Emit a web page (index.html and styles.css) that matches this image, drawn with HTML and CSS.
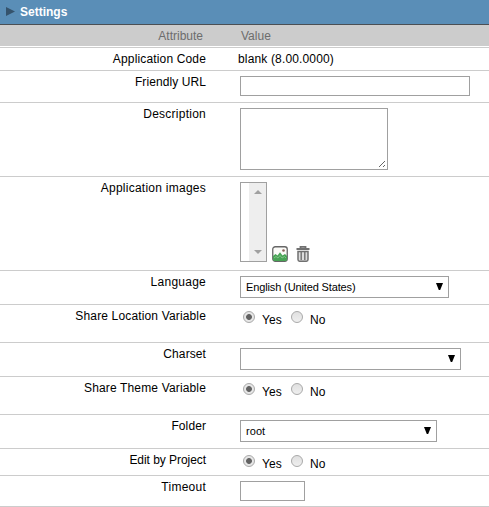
FILE: index.html
```
<!DOCTYPE html>
<html lang="en">
<head>
<meta charset="utf-8">
<title>Settings</title>
<link rel="stylesheet" href="styles.css">
</head>
<body>
<header class="title">
  <svg class="marker" width="9" height="9" viewBox="0 0 9 9"><path d="M0 0L9 4.5L0 9Z"/></svg>
  <span>Settings</span>
</header>
<div class="columns"><div class="label">Attribute</div><div>Value</div></div>
<main>
  <div class="row code"><div class="label">Application Code</div><div class="value plain">blank (8.00.0000)</div></div>
  <div class="row url"><div class="label">Friendly URL</div><div class="value"><div class="field wide"></div></div></div>
  <div class="row description"><div class="label">Description</div><div class="value"><div class="area">
    <svg width="9" height="9" viewBox="0 0 9 9" shape-rendering="crispEdges"><path d="M1 7L7 1M5 7L7 5"/></svg>
  </div></div></div>
  <div class="row images"><div class="label">Application images</div><div class="value">
    <div class="list"><div class="track">
      <svg width="8" height="4" viewBox="0 0 8 4"><path d="M0 4L4 0L8 4Z"/></svg>
      <svg width="8" height="4" viewBox="0 0 8 4"><path d="M0 0L4 4L8 0Z"/></svg>
    </div></div>
    <svg class="picture" width="16" height="16" viewBox="0 0 16 16">
      <rect x=".75" y=".75" width="14.5" height="14.5" rx="2.5" fill="#fbfbf8" stroke="#666" stroke-width="1.3"/>
      <path d="M1 10L3.5 8L5.5 9.5L8 6.2L10.5 9.5L13 8L15 10V13.5Q15 15 13.5 15H2.5Q1 15 1 13.5Z" fill="#48a355"/>
      <path d="M2 12L4 10.5L6 12L8 9.5L10 12L12.5 10.5L14 12" fill="none" stroke="#8dca92" stroke-width=".8"/>
      <circle cx="11.5" cy="4.5" r="1.3" fill="#8b6259"/>
    </svg>
    <svg class="trash" width="14" height="16" viewBox="0 0 14 16">
      <path d="M4.5 2V.8H9.5V2M.5 3H13.5" fill="none" stroke="#707070" stroke-width="1.8"/>
      <path d="M2 5.5V13.5Q2 15.2 3.5 15.2H10.5Q12 15.2 12 13.5V5.5Z" fill="#ddd" stroke="#707070" stroke-width="1.5"/>
      <path d="M5.2 5V14M8.8 5V14" stroke="#707070" stroke-width="1.4"/>
    </svg>
  </div></div>
  <div class="row choice"><div class="label loose">Language</div><div class="value"><div class="field select language"><span>English (United States)</span><svg width="7" height="7" viewBox="0 0 7 7"><path d="M0 0H7L4.2 7H2.8Z"/></svg></div></div></div>
  <div class="row share"><div class="label">Share Location Variable</div><div class="value options"><i class="radio on"></i><span>Yes</span><i class="radio"></i><span>No</span></div></div>
  <div class="row choice"><div class="label">Charset</div><div class="value"><div class="field select charset"><span></span><svg width="7" height="7" viewBox="0 0 7 7"><path d="M0 0H7L4.2 7H2.8Z"/></svg></div></div></div>
  <div class="row share"><div class="label">Share Theme Variable</div><div class="value options"><i class="radio on"></i><span>Yes</span><i class="radio"></i><span>No</span></div></div>
  <div class="row choice"><div class="label">Folder</div><div class="value"><div class="field select folder"><span>root</span><svg width="7" height="7" viewBox="0 0 7 7"><path d="M0 0H7L4.2 7H2.8Z"/></svg></div></div></div>
  <div class="row project"><div class="label">Edit by Project</div><div class="value options"><i class="radio on"></i><span>Yes</span><i class="radio"></i><span>No</span></div></div>
  <div class="row timeout"><div class="label">Timeout</div><div class="value"><div class="field short"></div></div></div>
</main>
</body>
</html>
```

FILE: styles.css
```
* { box-sizing: border-box; }
body {
  margin: 0;
  overflow: hidden;
  background: #fff;
  color: #000;
  font: 12px/14px "Liberation Sans", Arial, sans-serif;
  letter-spacing: .09px;
}
svg { display: block; flex: none; }
.title {
  display: flex;
  align-items: center;
  height: 25px;
  padding: 0 0 1px 6px;
  gap: 5px;
  background: #5a8eb7;
  border-bottom: 1px solid #4b4f54;
  color: #fff;
  font-weight: bold;
  letter-spacing: 0;
}
.marker { fill: #35536c; }
.columns {
  display: grid;
  grid-template-columns: 203px 1fr;
  column-gap: 38px;
  height: 21px;
  padding-top: 4px;
  background: #ccc;
  color: #6d6d6d;
  letter-spacing: 0;
}
.label { text-align: right; white-space: nowrap; }
main { margin-top: 1px; border-top: 1px solid #ccc; }
.row {
  display: grid;
  grid-template-columns: 206px 1fr;
  column-gap: 34px;
  padding-top: 4px;
  border-bottom: 1px solid #ccc;
}
.value { display: flex; align-items: flex-start; padding-top: 1px; }
.value.plain { padding: 0; margin-left: -2px; letter-spacing: .15px; }
.code { height: 23px; }
.url { height: 32px; }
.description { height: 74px; }
.images { height: 94px; }
.choice { height: 34px; }
.share { height: 38px; }
.project { height: 27px; }
.timeout { height: 31px; }
.code .label, .share .label { letter-spacing: .15px; }
.description .label, .images .label, .timeout .label, .label.loose { letter-spacing: .25px; }
.project .label { letter-spacing: -.05px; }
.field { height: 20px; border: 1px solid #a0a0a0; }
.wide { width: 230px; }
.short { width: 65px; }
.area {
  display: flex;
  align-items: flex-end;
  justify-content: flex-end;
  width: 148px;
  height: 62px;
  border: 1px solid #a0a0a0;
}
.area path { fill: none; stroke: #666; }
.list {
  display: flex;
  justify-content: flex-end;
  width: 27px;
  height: 80px;
  border: 1px solid #a0a0a0;
}
.track {
  display: flex;
  flex-direction: column;
  justify-content: space-between;
  align-items: center;
  width: 17px;
  padding: 7px 0;
  background: #eee;
}
.track svg { fill: #a0a0a0; }
.picture { margin: 64px 0 0 5px; }
.trash { margin: 64px 0 0 8px; }
.select {
  display: flex;
  align-items: center;
  justify-content: space-between;
  height: 22px;
  padding: 0 5px;
  font-size: 11px;
  letter-spacing: -.13px;
}
.folder span { letter-spacing: .05px; }
.select svg { margin-top: -1px; }
.language { width: 209px; }
.charset { width: 221px; }
.folder { width: 197px; }
.options { padding: 1px 0 0 3px; }
.options span { margin: 3px 0 0 7px; }
.options span:nth-of-type(1) { width: 29px; }
.radio {
  width: 12px;
  height: 12px;
  margin-top: 1px;
  border: 1px solid #a9a9a9;
  border-radius: 50%;
  background: linear-gradient(#e0e0e0, #efefef);
}
.radio.on { background: radial-gradient(circle, #626262 0 2.5px, #e6e6e6 3.3px); }
```
